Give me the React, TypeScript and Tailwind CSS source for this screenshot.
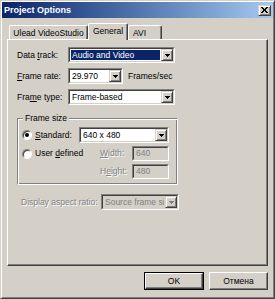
import type { ReactNode } from "react";

const raised =
  "border border-t-[#d4d0c8] border-l-[#d4d0c8] border-r-[#404040] border-b-[#404040] shadow-[inset_1px_1px_0_#ffffff,inset_-1px_-1px_0_#808080]";
const sunkenOuter = "border border-t-[#808080] border-l-[#808080] border-r-white border-b-white";
const sunkenInner = "border border-t-[#404040] border-l-[#404040] border-r-[#d4d0c8] border-b-[#d4d0c8]";
const disabledText = "text-[#808080] [text-shadow:1px_1px_0_#ffffff]";

function Arrow({ disabled }: { disabled?: boolean }) {
  return (
    <svg width="5" height="3" viewBox="0 0 5 3" shapeRendering="crispEdges" aria-hidden="true">
      <path d="M0 0h5v1H0zM1 1h3v1H1zM2 2h1v1H2z" fill={disabled ? "#808080" : "#000000"} />
    </svg>
  );
}

function Combo({
  value,
  width,
  selected,
  disabled,
}: {
  value: string;
  width: string;
  selected?: boolean;
  disabled?: boolean;
}) {
  return (
    <div className={`${width} h-[16px] ${sunkenOuter}`}>
      <div className={`h-full flex ${sunkenInner} ${disabled ? "bg-[#d4d0c8]" : "bg-white"}`}>
        <div className="flex-1 min-w-0 overflow-hidden flex p-[1px]">
          <span
            className={`flex-1 flex items-center pl-[1px] whitespace-nowrap overflow-hidden ${
              selected ? "bg-[#0a246a] text-white" : disabled ? "text-[#808080]" : "text-black"
            }`}
          >
            {value}
          </span>
        </div>
        <div className={`w-[12px] h-full shrink-0 flex items-center justify-center bg-[#d4d0c8] ${raised}`}>
          <Arrow disabled={disabled} />
        </div>
      </div>
    </div>
  );
}

function TextBox({ value }: { value: string }) {
  return (
    <div className={`w-[37px] h-[15px] ${sunkenOuter}`}>
      <div className={`h-full flex items-center pl-[2px] bg-[#d4d0c8] text-[#808080] ${sunkenInner}`}>{value}</div>
    </div>
  );
}

function Radio({ checked }: { checked?: boolean }) {
  return (
    <div className="w-[10px] h-[10px] rounded-full bg-white border border-t-[#808080] border-l-[#808080] border-r-white border-b-white shadow-[inset_1px_1px_0_#404040] flex items-center justify-center shrink-0">
      {checked && <div className="w-[4px] h-[4px] rounded-full bg-black" />}
    </div>
  );
}

function Tab({ children, active, width }: { children: ReactNode; active?: boolean; width: string }) {
  return (
    <div
      className={`${width} flex items-start justify-center whitespace-nowrap bg-[#d4d0c8] rounded-t-[2px] border-t border-l border-r border-t-white border-l-white border-r-[#404040] shadow-[inset_-1px_0_0_#808080] ${
        active ? "relative z-10 h-[17px] -mb-[1px] pt-[2px]" : "h-[14px] pt-[2px]"
      }`}
    >
      {children}
    </div>
  );
}

export default function App() {
  return (
    <div className="w-[275px] h-[299px] bg-[#d4d0c8] p-[1px] flex flex-col text-[8.5px] leading-[11px] text-black font-['Liberation_Sans',Arial,sans-serif] border border-t-[#d4d0c8] border-l-[#d4d0c8] border-r-[#404040] border-b-[#404040] shadow-[inset_1px_1px_0_#ffffff,inset_-1px_-1px_0_#808080]">
      {/* Title bar */}
      <div className="h-[16px] shrink-0 flex items-center justify-between pl-[2px] pr-[2px] bg-linear-to-r from-[#0a246a] to-[#a6caf0]">
        <span className="font-bold text-white text-[9px]">Project Options</span>
        <div className={`w-[13px] h-[11px] flex items-center justify-center bg-[#d4d0c8] ${raised}`}>
          <svg width="7" height="6" viewBox="0 0 7 6" shapeRendering="crispEdges" aria-hidden="true">
            <path
              d="M0 0h2v1H0zM5 0h2v1H5zM1 1h2v1H1zM4 1h2v1H4zM2 2h3v2H2zM1 4h2v1H1zM4 4h2v1H4zM0 5h2v1H0zM5 5h2v1H5z"
              fill="#000000"
            />
          </svg>
        </div>
      </div>

      {/* Tabs */}
      <div className="h-[21px] shrink-0 flex items-end pl-[7px]">
        <Tab width="w-[79px]">Ulead VideoStudio</Tab>
        <Tab width="w-[40px]" active>
          General
        </Tab>
        <Tab width="w-[34px]">
          <span className="w-full pl-[4px]">AVI</span>
        </Tab>
      </div>

      {/* Panel */}
      <div className="relative ml-[5px] w-[261px] h-[227px] shrink-0 border border-t-white border-l-white border-r-[#404040] border-b-[#404040] shadow-[inset_-1px_-1px_0_#808080] pl-[9px] pt-[7px] flex flex-col">
        <div className="flex items-center h-[16px]">
          <span className="w-[51px]">
            Data <span className="underline">t</span>rack:
          </span>
          <Combo width="w-[107px]" value="Audio and Video" selected />
        </div>
        <div className="flex items-center h-[16px] mt-[5px]">
          <span className="w-[51px]">
            <span className="underline">F</span>rame rate:
          </span>
          <Combo width="w-[55px]" value="29.970" />
          <span className="ml-[5px]">Frames/sec</span>
        </div>
        <div className="flex items-center h-[16px] mt-[5px]">
          <span className="w-[51px]">
            Fra<span className="underline">m</span>e type:
          </span>
          <Combo width="w-[107px]" value="Frame-based" />
        </div>

        {/* Frame size group */}
        <fieldset className="mt-[8px] w-[161px] border border-t-[#808080] border-l-[#808080] border-r-white border-b-white shadow-[inset_1px_1px_0_#ffffff,inset_-1px_-1px_0_#808080] pl-[4px] pb-[5px]">
          <legend className="ml-[1px] px-[2px] bg-[#d4d0c8]">Frame size</legend>
          <div className="flex items-center h-[16px] mt-[3px]">
            <div className="w-[57px] flex items-center gap-[3px]">
              <Radio checked />
              <span>
                <span className="underline">S</span>tandard:
              </span>
            </div>
            <Combo width="w-[90px]" value="640 x 480" />
          </div>
          <div className="flex items-center h-[15px] mt-[3px]">
            <div className="w-[78px] flex items-center gap-[3px]">
              <Radio />
              <span>
                User <span className="underline">d</span>efined
              </span>
            </div>
            <span className={`w-[32px] ${disabledText}`}>
              <span className="underline">W</span>idth:
            </span>
            <TextBox value="640" />
          </div>
          <div className="flex items-center h-[15px] mt-[3px]">
            <div className="w-[78px]" />
            <span className={`w-[32px] ${disabledText}`}>
              H<span className="underline">e</span>ight:
            </span>
            <TextBox value="480" />
          </div>
        </fieldset>

        <div className="flex items-center h-[16px] mt-[9px] ml-[4px]">
          <span className={`w-[80px] whitespace-nowrap ${disabledText}`}>Display aspect ratio:</span>
          <Combo width="w-[78px]" value="Source frame si" disabled />
        </div>
      </div>

      {/* Buttons */}
      <div className="flex justify-end gap-[5px] mt-[6px] mr-[5px]">
        <div className="w-[60px] h-[18px] border border-black">
          <div className="h-full flex items-center justify-center border border-t-white border-l-white border-r-[#404040] border-b-[#404040] shadow-[inset_-1px_-1px_0_#808080]">
            OK
          </div>
        </div>
        <div className="w-[59px] h-[18px] flex items-center justify-center border border-t-white border-l-white border-r-[#404040] border-b-[#404040] shadow-[inset_-1px_-1px_0_#808080]">
          Отмена
        </div>
      </div>
    </div>
  );
}
